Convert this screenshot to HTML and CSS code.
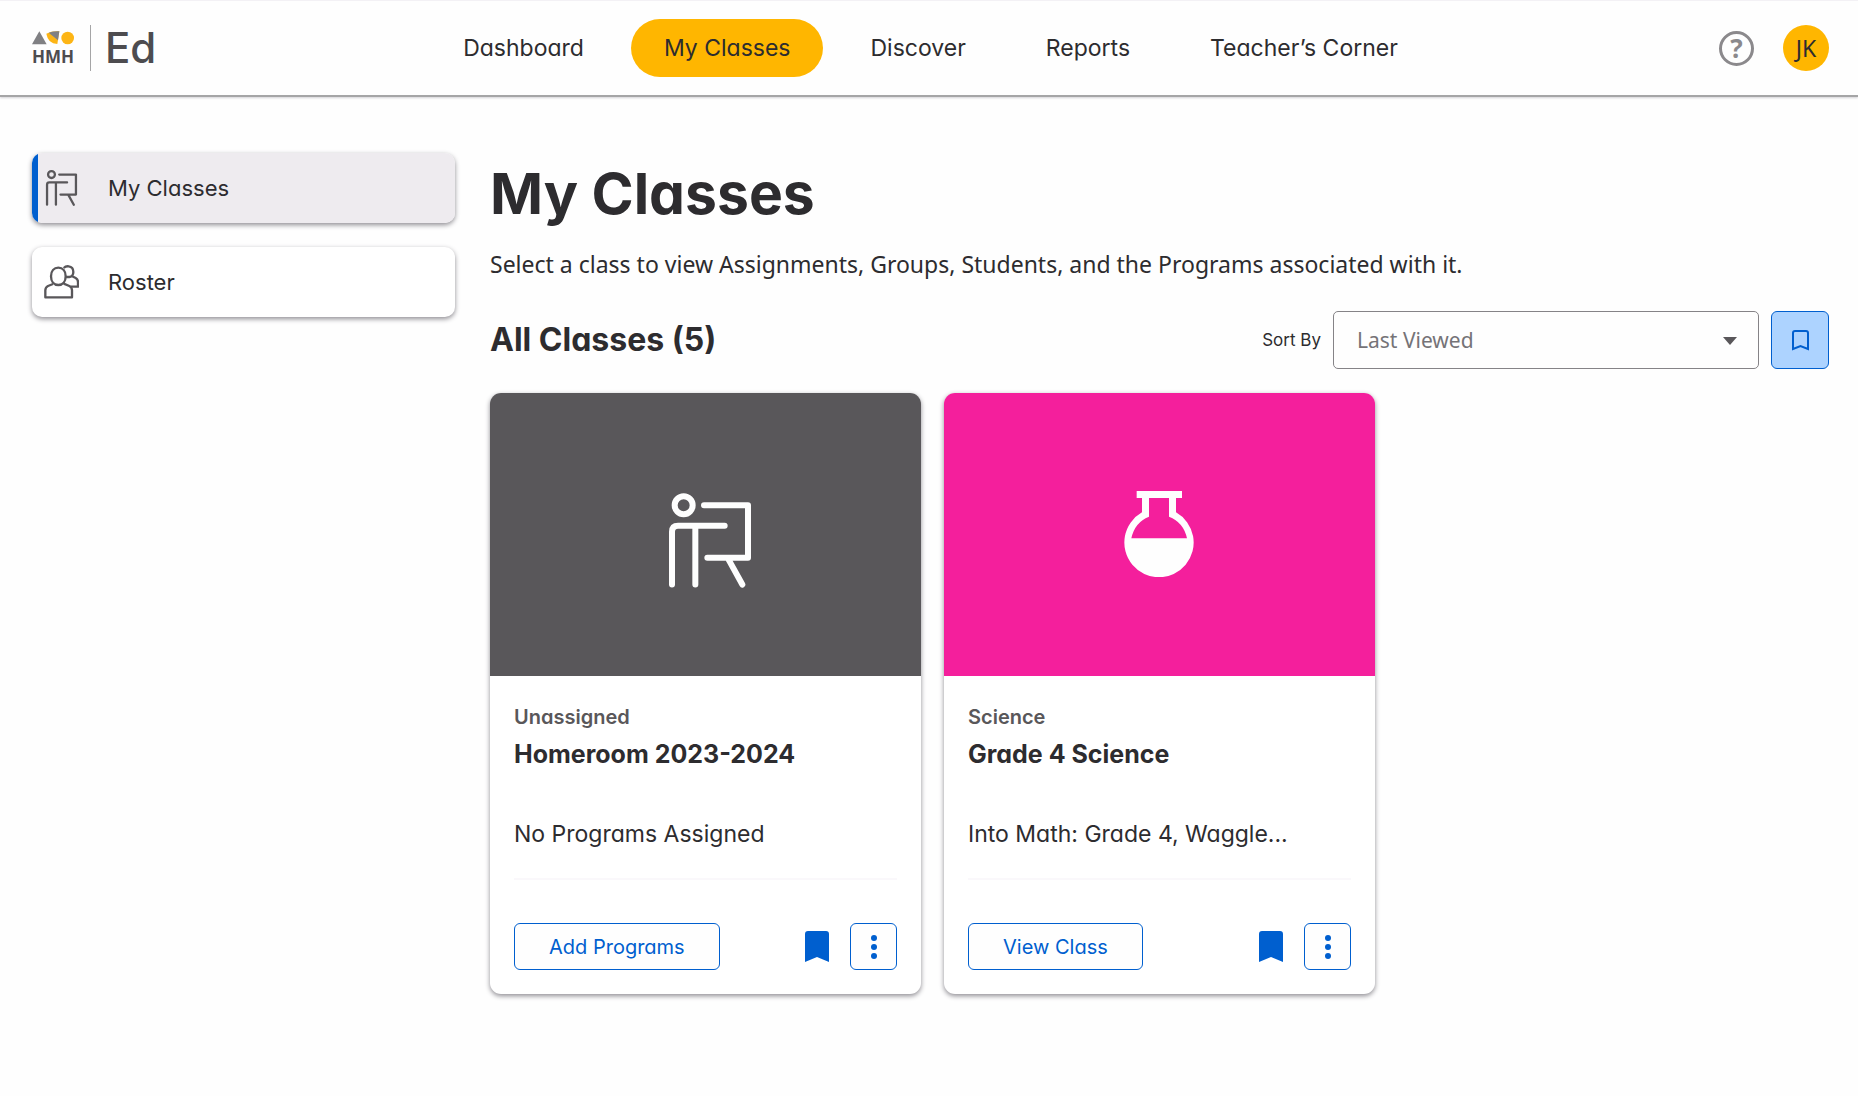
FILE: index.html
```html
<!DOCTYPE html>
<html lang="en">
<head>
<meta charset="utf-8">
<meta name="viewport" content="width=device-width, initial-scale=1">
<title>My Classes</title>
<link rel="stylesheet" href="styles.css">
</head>
<body>
<svg class="sprite" aria-hidden="true">
  <symbol id="presenter" viewBox="86 68 246 284">
    <g fill="none" stroke="currentColor" stroke-width="18" stroke-linecap="round" stroke-linejoin="round">
      <circle cx="130" cy="104" r="27"/>
      <path d="M95 342V184Q95 166 113 166H253M165 166V342M191 104H323V262H201M264 266L306 342"/>
    </g>
  </symbol>
  <symbol id="bookmark" viewBox="0 0 24 31">
    <path fill="currentColor" d="M3 0H21Q24 0 24 3V31L12 26L0 31V3Q0 0 3 0Z"/>
  </symbol>
  <symbol id="kebab" viewBox="0 0 6 24">
    <g fill="currentColor"><circle cx="3" cy="3" r="3"/><circle cx="3" cy="12" r="3"/><circle cx="3" cy="21" r="3"/></g>
  </symbol>
</svg>

<header class="header">
  <a class="brand" href="#">
    <span class="brand-mark">
      <svg width="42" height="14" viewBox="0 0 126 42" aria-hidden="true">
        <path fill="#808083" d="M22 1L44 40H0Z"/>
        <path fill="#fdb515" d="M43 8Q58 0 82 1L76 39Q48 38 43 8Z"/>
        <path fill="#808083" d="M50 5Q66 0 82 1L78 28Z"/>
        <circle cx="107" cy="21" r="19" fill="#fdb515"/>
      </svg>
      <span class="brand-hmh">HMH</span>
    </span>
    <span class="brand-ed">Ed</span>
  </a>
  <nav class="nav" aria-label="Main">
    <a href="#">Dashboard</a>
    <a class="active" href="#" aria-current="page">My Classes</a>
    <a href="#">Discover</a>
    <a href="#">Reports</a>
    <a href="#">Teacher’s Corner</a>
  </nav>
  <div class="account">
    <button class="help" type="button">?</button>
    <button class="avatar" type="button">JK</button>
  </div>
</header>

<div class="page">
  <nav class="sidebar" aria-label="Classes">
    <a class="side-link selected" href="#">
      <svg class="side-icon" width="31" height="36" aria-hidden="true"><use href="#presenter"/></svg>
      My Classes
    </a>
    <a class="side-link" href="#">
      <svg class="side-icon" width="35" height="34" viewBox="72 375 105 102" fill="none" stroke="currentColor" stroke-width="7" stroke-linejoin="round" aria-hidden="true">
        <path d="M115 383C128 383 137 393 137 409S128 435 115 435S93 425 93 409S102 383 115 383Z"/>
        <path d="M99 432L84 438Q76 442 76 451V472H156V451Q156 442 148 438L131 431"/>
        <path d="M131 384Q137 378 146 379C156 380 160 388 160 396S156 410 148 411H138M155 408L167 414Q174 418 174 426V440H152"/>
      </svg>
      Roster
    </a>
  </nav>

  <main class="main">
    <h1>My Classes</h1>
    <p class="intro">Select a class to view Assignments, Groups, Students, and the Programs associated with it.</p>
    <div class="toolbar">
      <h2>All Classes (5)</h2>
      <label class="sort-label" for="sort">Sort By</label>
      <div class="select">
        <select id="sort"><option>Last Viewed</option></select>
        <svg class="caret" width="14" height="8" viewBox="0 0 14 8" aria-hidden="true"><path fill="#59575a" d="M0 0H14L7 8Z"/></svg>
      </div>
      <button class="filter" type="button" aria-label="Bookmarked">
        <svg width="17" height="21" viewBox="0 0 17 21" aria-hidden="true"><path fill="none" stroke="currentColor" stroke-width="2" d="M1 19V3Q1 1 3 1H14Q16 1 16 3V19L8.500 16Z"/></svg>
      </button>
    </div>

    <div class="cards">
      <article class="card">
        <div class="cover">
          <svg width="82" height="95" aria-hidden="true"><use href="#presenter"/></svg>
        </div>
        <div class="body">
          <p class="subject">Unassigned</p>
          <h3>Homeroom 2023-2024</h3>
          <p class="programs">No Programs Assigned</p>
          <hr>
          <div class="actions">
            <button class="action" type="button">Add Programs</button>
            <button class="saved" type="button" aria-label="Bookmark"><svg width="24" height="31" aria-hidden="true"><use href="#bookmark"/></svg></button>
            <button class="more" type="button" aria-label="More"><svg width="6" height="24" aria-hidden="true"><use href="#kebab"/></svg></button>
          </div>
        </div>
      </article>
      <article class="card">
        <div class="cover science">
          <svg width="70" height="86" viewBox="69 60 210 258" aria-hidden="true">
            <path fill="currentColor" fill-rule="evenodd" d="M107 60H243V81H225V124A104 104 0 1 1 123 124V81H107ZM144 81V137Q101 154 91 202H258Q248 154 204 137V81Z"/>
          </svg>
        </div>
        <div class="body">
          <p class="subject">Science</p>
          <h3>Grade 4 Science</h3>
          <p class="programs">Into Math: Grade 4, Waggle...</p>
          <hr>
          <div class="actions">
            <button class="action" type="button">View Class</button>
            <button class="saved" type="button" aria-label="Bookmark"><svg width="24" height="31" aria-hidden="true"><use href="#bookmark"/></svg></button>
            <button class="more" type="button" aria-label="More"><svg width="6" height="24" aria-hidden="true"><use href="#kebab"/></svg></button>
          </div>
        </div>
      </article>
    </div>
  </main>
</div>
</body>
</html>
```
FILE: styles.css
```css
* { box-sizing: border-box; }

body {
  margin: 0;
  background: #fefefe;
  color: #2d2c2f;
  font-family: Inter, "Liberation Sans", sans-serif;
  font-feature-settings: "cv11";
  font-size: 22px;
  line-height: 28px;
}

h1, h2, h3, p { margin: 0; }
a { color: inherit; text-decoration: none; }
button, select { font: inherit; font-feature-settings: inherit; color: inherit; padding: 0; cursor: pointer; }
svg { display: block; }
.sprite { position: absolute; width: 0; height: 0; }

.header {
  display: grid;
  grid-template-columns: 1fr auto 1fr;
  align-items: center;
  height: 97px;
  padding: 0 29px 0 32px;
  border-top: 1px solid #f3f1f5;
  border-bottom: 2px solid #a5a5a6;
  box-shadow: 0 1px 2px #d4d2d6;
}

.brand { display: flex; align-items: center; color: #4d4c4f; }
.brand-mark { display: flex; flex-direction: column; align-items: center; gap: 3px; padding-right: 16px; }
.brand-hmh { font: bold 17px/17px "Open Sans", sans-serif; }
.brand-ed {
  padding-left: 14px;
  border-left: 1px solid #a5a5a6;
  font-size: 42px;
  font-weight: 500;
  line-height: 46px;
}

.nav { display: flex; gap: 14px; font-size: 23px; }
.nav a { padding: 15px 33px; border-radius: 29px; }
.nav .active { background: #ffb600; }

.account { display: flex; justify-content: flex-end; align-items: center; gap: 29px; }
.help {
  width: 35px;
  height: 35px;
  border: 3px solid #8b898c;
  border-radius: 50%;
  background: none;
  color: #8b898c;
  font: bold 26px/28px "Noto Sans", sans-serif;
}
.avatar {
  width: 46px;
  height: 46px;
  border: 0;
  border-radius: 50%;
  background: #ffb600;
  font: 23px/46px "Noto Sans", sans-serif;
}

.page { display: flex; gap: 35px; padding: 56px 29px 56px 32px; }

.sidebar { display: flex; flex: 0 0 423px; flex-direction: column; gap: 24px; }
.side-link {
  display: flex;
  align-items: center;
  gap: 29px;
  height: 70px;
  padding-left: 12px;
  border-radius: 10px;
  background: #fff;
  box-shadow: 0 2px 5px #8f8d93;
}
.selected { background: linear-gradient(to right, #005fcf 6px, #eeebef 6px); }
.side-icon { flex: none; width: 35px; color: #59575a; }

.main { flex: 1; min-width: 0; }
h1 { font-size: 57px; font-weight: 700; line-height: 82px; }
.intro { margin-top: 13px; font-family: "Noto Sans", sans-serif; font-size: 23px; line-height: 32px; }

.toolbar { display: flex; align-items: center; margin-top: 31px; }
h2 { flex: 1; font-size: 32px; font-weight: 700; line-height: 40px; }
.sort-label { margin-right: 12px; font-size: 17px; }
.select { position: relative; width: 426px; }
.select select {
  width: 100%;
  height: 58px;
  padding: 0 23px;
  border: 1px solid #858387;
  border-radius: 5px;
  appearance: none;
  background: #fefefe;
  color: #757377;
  font-family: "Noto Sans", sans-serif;
  font-size: 21px;
}
.caret { position: absolute; top: 26px; right: 22px; pointer-events: none; }
.filter {
  display: grid;
  place-items: center;
  width: 58px;
  height: 58px;
  margin-left: 12px;
  border: 1px solid #005fcf;
  border-radius: 6px;
  background: #add3ff;
  color: #005fcf;
}

.cards { display: grid; grid-template-columns: repeat(3, 1fr); gap: 23px; margin-top: 24px; }
.card { overflow: hidden; border-radius: 11px; background: #fff; box-shadow: 0 2px 5px #8f8d93; }
.cover {
  display: grid;
  place-items: center;
  height: 283px;
  padding: 12px 0 0 8px;
  background: #59575a;
  color: #fefefe;
}
.science { padding: 0 2px 2px 0; background: #f41f9c; }
.body { padding: 27px 24px 24px; }
.subject { color: #59575a; font-size: 20px; font-weight: 600; line-height: 28px; }
h3 { margin-top: 5px; font-size: 25px; font-weight: 700; line-height: 36px; }
.programs { margin-top: 48px; overflow: hidden; font-size: 23px; text-overflow: ellipsis; white-space: nowrap; }
hr { height: 2px; margin: 30px 0 43px; border: 0; background: #faf8fb; }
.actions { display: flex; align-items: center; gap: 21px; }
.action, .more { height: 47px; border: 1px solid #005fcf; border-radius: 6px; background: #fefefe; color: #005fcf; }
.action { margin-right: auto; padding: 0 34px; font-size: 20px; }
.saved { border: 0; background: none; color: #005fcf; }
.more { display: grid; place-items: center; width: 47px; }
```
